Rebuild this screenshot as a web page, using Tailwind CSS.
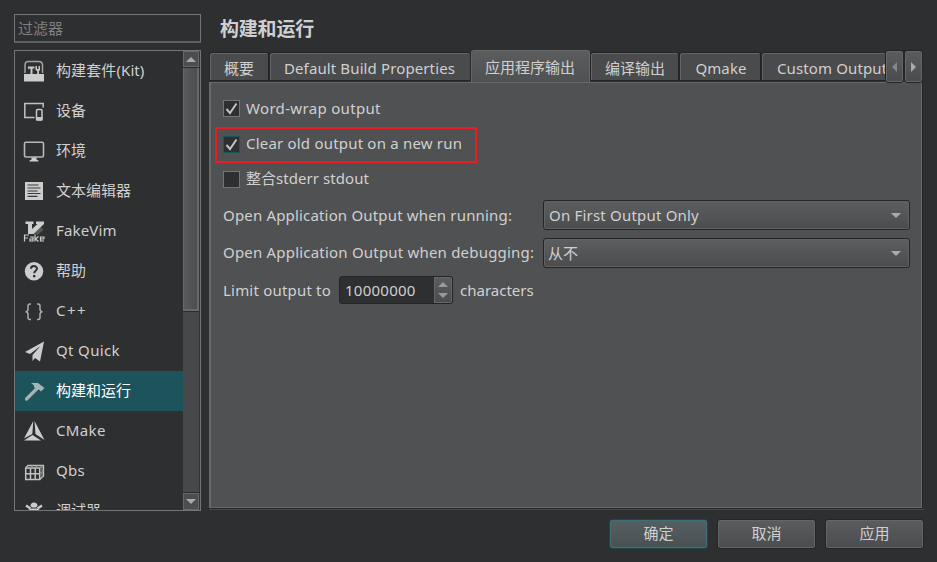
<!DOCTYPE html>
<html lang="zh-CN">
<head>
<meta charset="utf-8">
<title>构建和运行</title>
<script src="https://cdn.jsdelivr.net/npm/@tailwindcss/browser@4"></script>
</head>
<body class="w-[937px] h-[562px] overflow-hidden bg-[#2e2f30] text-[#d0d0d0] text-[15px] leading-5 whitespace-nowrap font-['Noto_Sans','Noto_Sans_CJK_SC',sans-serif]">
<div class="flex h-full pl-[14px] pt-[14px]">
  <aside class="w-[187px] shrink-0 flex flex-col gap-[7px]">
    <div class="h-[29px] border border-[#737475] border-b-2 border-b-[#606162] flex items-center pl-[3px] text-[#7f8081]">过滤器</div>
    <div class="h-[461px] border border-[#737475] flex overflow-hidden">
      <ul class="w-[168px] h-[459px] overflow-hidden [&>li]:h-10 [&>li]:flex [&>li]:items-center [&>li]:pl-2 [&>li]:gap-[11px] [&>li>span]:pb-[2px] [&_svg]:w-[22px] [&_svg]:h-[22px] [&_svg]:shrink-0">
        <li><svg viewBox="0 0 22 22" fill="none"><path d="M2 13V5Q2 1.500 5.500 1.500h10Q19.500 1.500 19.500 5v8" stroke="#a4a4a4" stroke-width="1.500"/><path d="M1 14h20v7.500H1z" fill="#cdcdcd"/><path d="M5 6.500h6.500v2H9.500V14H7.500V8.500L5 9zM12.500 6H14v3h1.500V6H17v4l-1 1v3h-1.800v-3l-1.700-1z" fill="#c8c8c8"/></svg><span class="tracking-[0.1px]">构建套件(Kit)</span></li>
        <li><svg viewBox="0 0 22 22" fill="none"><path d="M11.500 17.500H1.800V3.500H20.200v4" stroke="#c2c2c2" stroke-width="1.500"/><rect x="13.500" y="9.500" width="5.500" height="10.500" rx="1" stroke="#c8c8c8" stroke-width="1.500"/><path d="M13 17h6.500v3.500H13z" fill="#c8c8c8"/></svg><span>设备</span></li>
        <li><svg viewBox="0 0 22 22" fill="none"><rect x="1.500" y="2.300" width="19" height="14.700" rx="1.500" stroke="#b8b8b8" stroke-width="1.600"/><path d="M8.500 17.500h5v2l2 1v1h-9v-1l2-1z" fill="#cdcdcd"/></svg><span>环境</span></li>
        <li><svg viewBox="0 0 22 22"><path d="M2 2h18v18H2z" fill="#cdcdcd"/><path d="M4.500 5h11M4.500 8h13M4.500 11h10M4.500 13.500h13M4.500 16.300h10" stroke="#3a3a3a" stroke-width="1.200"/></svg><span>文本编辑器</span></li>
        <li><svg viewBox="0 0 22 22"><path d="m16 5 4.500 5-6 5-5-2z" fill="#555657"/><path d="M2.500 1.500h8v2.500H9v5l5.500-5H13V1.500h8V4L10.500 14H5V4H2.500z" fill="#cdcdcd"/><path d="M1.500 21.500V15H6M1.500 18H5M7 17h3v4H7v-2h3M12 14.500v7m3.500-5L12.500 19l3 2.500M21 19h-3.500v-2H21v2M17.500 19v2H21" fill="none" stroke="#cdcdcd" stroke-width="1.200"/></svg><span class="tracking-[0.15px]">FakeVim</span></li>
        <li><svg viewBox="0 0 22 22" fill="none"><circle cx="11" cy="11.300" r="9.200" fill="#cdcdcd"/><path d="M8 8.800C8 5.200 14 5.300 14 8.600c0 2.200-2.800 2.200-2.800 4.700" stroke="#303132" stroke-width="2"/><path d="M10 15h2.400v2.300H10z" fill="#303132"/></svg><span>帮助</span></li>
        <li><svg viewBox="0 0 22 22" fill="none" stroke="#adadad" stroke-width="1.500"><path d="M8 4H7Q5 4 5 6v3Q5 11.700 2.500 11.700 5 11.700 5 14.500V17.500q0 2 2 2h1M14 4h1q2 0 2 2v3q0 2.700 2.500 2.700Q17 11.700 17 14.500V17.500q0 2-2 2h-1"/></svg><span class="tracking-[1.5px]">C++</span></li>
        <li><svg viewBox="0 0 22 22" fill="#cdcdcd"><path d="M21 1.500 2 12l5 2L17.500 6 9.500 15v6l2.500-3 5 3.500z"/></svg><span class="tracking-[0.35px]">Qt Quick</span></li>
        <li class="bg-[#1d545c] text-white"><svg viewBox="0 0 22 22"><path d="M3.500 19 14 8.500" stroke="#a5b4b7" stroke-width="3.200" stroke-linecap="round"/><path d="M8 3h7l6.500 5-3.500 3.500-2-2-2 .5-3-3V5.500z" fill="#a5b4b7"/></svg><span>构建和运行</span></li>
        <li><svg viewBox="0 0 22 22" fill="#cdcdcd"><path d="M10.300 1 1 18.500l8.300-4.500zM11.500 1l1 13 9 6zM1 20.500l8.500-5.500L18 20.500z"/></svg><span class="tracking-[0.35px]">CMake</span></li>
        <li><svg viewBox="0 0 22 22" fill="none" stroke="#c2c2c2" stroke-width="1.500"><path d="M2.700 8h14v11.500h-14zM7.500 8v11.500M12.200 8v11.500M2.700 13.700h14"/><path d="M3 7.500 5 5.500h15.500V16l-3.800 3.500" stroke-width="1.300"/><path d="m17 7.700 3-2M17 13.500l3.500-2.500M19 7v11M8 7.500l2-2M12.500 7.500l2-2" stroke="#929292" stroke-width="1.100"/></svg><span class="tracking-[0.3px]">Qbs</span></li>
        <li><svg viewBox="0 0 22 22" fill="#cdcdcd"><path d="M7.500 6Q7.500 2.500 11 2.500T14.500 6L13 7.500H9zM5 10l3-1.500h6l3 1.500v8H5z"/><path d="m3 5.500 4.500 3M19 5.500l-4.500 3M1.500 11h19" stroke="#cdcdcd" stroke-width="2.200"/></svg><span>调试器</span></li>
      </ul>
      <div class="w-[17px] bg-[#474849] flex flex-col border-r border-[#333435]">
        <div class="h-[16px] border border-[#666768] bg-[#4c4d4f] flex items-center justify-center"><svg width="10" height="5"><path d="M0 5 5 0l5 5z" fill="#aaa"/></svg></div>
        <div class="h-px bg-[#2b2c2d]"></div>
        <div class="h-[243px] border border-t-0 border-r-2 border-b-2 border-[#686969] bg-linear-to-r from-[#5a5b5d] to-[#4c4d4f]"></div>
        <div class="h-px bg-[#2b2c2d]"></div>
        <div class="flex-1"></div>
        <div class="h-px bg-[#2b2c2d]"></div>
        <div class="h-[17px] border border-[#666768] bg-[#4c4d4f] flex items-center justify-center"><svg width="10" height="5"><path d="M0 0h10L5 5z" fill="#aaa"/></svg></div>
      </div>
    </div>
  </aside>
  <main class="ml-2 w-[714px] flex flex-col">
    <h1 class="h-[36px] pl-[11px] pt-[5px] font-bold text-[19px] tracking-[-0.2px]">构建和运行</h1>
    <div class="relative h-[32px] z-10 flex">
      <div class="w-[677px] overflow-hidden flex items-end">
        <div class="h-[29px] w-[61px] mb-px shrink-0 rounded-t-[3px] border border-r-2 border-[#242526] bg-[#4a4b4c] shadow-[inset_1px_1px_#656667] flex items-center justify-center"><span class="pt-[2px]">概要</span></div>
        <div class="h-[29px] w-[201px] mb-px shrink-0 rounded-t-[3px] border border-l-0 border-[#242526] bg-[#4a4b4c] shadow-[inset_1px_1px_#656667] flex items-center justify-center"><span class="tracking-[0.12px] pt-[3px] pr-px">Default Build Properties</span></div>
        <div class="h-[32px] w-[119px] shrink-0 rounded-t-[3px] border border-b-0 border-[#666768] bg-linear-to-b from-[#5b5c5e] to-[#505152] flex items-center justify-center"><span class="pt-px pr-px">应用程序输出</span></div>
        <div class="h-[29px] w-[90px] mb-px shrink-0 rounded-t-[3px] border border-r-2 border-[#242526] bg-[#4a4b4c] shadow-[inset_1px_1px_#656667] flex items-center justify-center"><span class="pt-[3px] pl-px">编译输出</span></div>
        <div class="h-[29px] w-[82px] mb-px shrink-0 rounded-t-[3px] border border-l-0 border-r-2 border-[#242526] bg-[#4a4b4c] shadow-[inset_1px_1px_#656667] flex items-center justify-center"><span class="pt-[3px] pl-[2px] tracking-[0.1px]">Qmake</span></div>
        <div class="h-[29px] w-[124px] mb-px shrink-0 rounded-t-[3px] border border-l-0 border-r-0 border-[#242526] bg-[#4a4b4c] shadow-[inset_1px_1px_#656667] flex items-center pl-[15px]"><span class="tracking-[0.12px] pt-[3px]">Custom Output</span></div>
      </div>
      <div class="w-[19px] h-[33px] rounded-[3px] border border-[#242526] bg-linear-to-b from-[#5b5c5e] to-[#4b4c4e] shadow-[inset_0_0_0_1px_#656667] flex items-center justify-center"><svg width="5" height="10"><path d="M5 0v10L0 5z" fill="#858687"/></svg></div>
      <div class="w-[19px] h-[33px] rounded-[3px] border border-[#242526] bg-linear-to-b from-[#5b5c5e] to-[#4b4c4e] shadow-[inset_0_0_0_1px_#656667] flex items-center justify-center"><svg width="5" height="10"><path d="M0 0v10l5-5z" fill="#aaa"/></svg></div>
    </div>
    <section class="h-[426px] w-[713px] border border-l-2 border-[#686969] bg-[#505152] shadow-[0_1px_#242526,1px_0_#242526] pl-[4px] pt-[14px]">
      <label class="flex items-center gap-[6px] h-[22px] pl-[8px] pt-px"><span class="size-[17px] border border-[#747576] bg-[#2e2f30] flex items-center justify-center"><svg width="13" height="13"><path d="m1.500 7 3.500 4 6.500-9.500" fill="none" stroke="#c0c0c0" stroke-width="2"/></svg></span><span class="tracking-[0.33px] pb-px">Word-wrap output</span></label>
      <label class="mt-[8px] flex items-center gap-[6px] w-[262px] h-[36px] border-2 border-[#ed1c24] pl-[6px] pb-[2px]"><span class="size-[17px] border border-[#1d545c] bg-[#2e2f30] flex items-center justify-center"><svg width="13" height="13"><path d="m1.500 7 3.500 4 6.500-9.500" fill="none" stroke="#c0c0c0" stroke-width="2"/></svg></span><span class="tracking-[0.2px] pb-[3px]">Clear old output on a new run</span></label>
      <label class="mt-[5px] flex items-center gap-[6px] h-[22px] pl-[8px]"><span class="size-[17px] border border-[#747576] bg-[#2e2f30]"></span><span class="pb-[2px] tracking-[0.05px]">整合stderr stdout</span></label>
      <div class="mt-[10px] pl-[8px] grid grid-cols-[320px_367px] gap-y-[8px] items-center">
        <span class="tracking-[0.17px]">Open Application Output when running:</span>
        <div class="h-[30px] rounded-[3px] border border-[#242526] bg-linear-to-b from-[#5d5e60] to-[#4b4c4e] shadow-[inset_0_0_0_1px_#616264] flex items-center justify-between pl-[5px] pr-[8px]"><span class="tracking-[0.2px]">On First Output Only</span><svg width="10" height="5"><path d="M0 0h10L5 5z" fill="#aaa"/></svg></div>
        <span class="tracking-[0.2px] pb-[2px]">Open Application Output when debugging:</span>
        <div class="h-[30px] rounded-[3px] border border-[#242526] bg-linear-to-b from-[#5d5e60] to-[#4b4c4e] shadow-[inset_0_0_0_1px_#616264] flex items-center justify-between pl-[4px] pr-[8px]"><span class="pb-px">从不</span><svg width="10" height="5"><path d="M0 0h10L5 5z" fill="#aaa"/></svg></div>
      </div>
      <div class="mt-[8px] pl-[8px] flex items-center">
        <span class="w-[116px] tracking-[0.2px]">Limit output to</span>
        <div class="w-[114px] h-[28px] rounded-[3px] border border-[#242526] bg-[#2e2f30] flex overflow-hidden">
          <span class="flex-1 pl-[5px] flex items-center tracking-[0.25px]">10000000</span>
          <div class="w-[18px] border border-[#656667] bg-linear-to-b from-[#5b5c5e] to-[#4b4c4e] flex flex-col gap-[6px] items-center justify-center"><svg width="10" height="5"><path d="M0 5 5 0l5 5z" fill="#999"/></svg><svg width="10" height="5"><path d="M0 0h10L5 5z" fill="#999"/></svg></div>
        </div>
        <span class="pl-[7px]">characters</span>
      </div>
    </section>
    <footer class="mt-[1px] border-t border-[#48494a] pt-[9px] -mr-px flex justify-end gap-[9px]">
      <button class="w-[99px] h-[30px] pb-[2px] rounded-[3px] border border-[#1d454d] bg-linear-to-b from-[#566062] to-[#485052] shadow-[inset_0_0_0_1px_#3f6f76]">确定</button>
      <button class="w-[99px] h-[30px] pb-[2px] rounded-[3px] border border-[#242526] bg-linear-to-b from-[#5b5c5e] to-[#4b4c4e] shadow-[inset_0_0_0_1px_#656667]">取消</button>
      <button class="w-[99px] h-[30px] pb-[2px] rounded-[3px] border border-[#242526] bg-linear-to-b from-[#5b5c5e] to-[#4b4c4e] shadow-[inset_0_0_0_1px_#656667]">应用</button>
    </footer>
  </main>
</div>
</body>
</html>
